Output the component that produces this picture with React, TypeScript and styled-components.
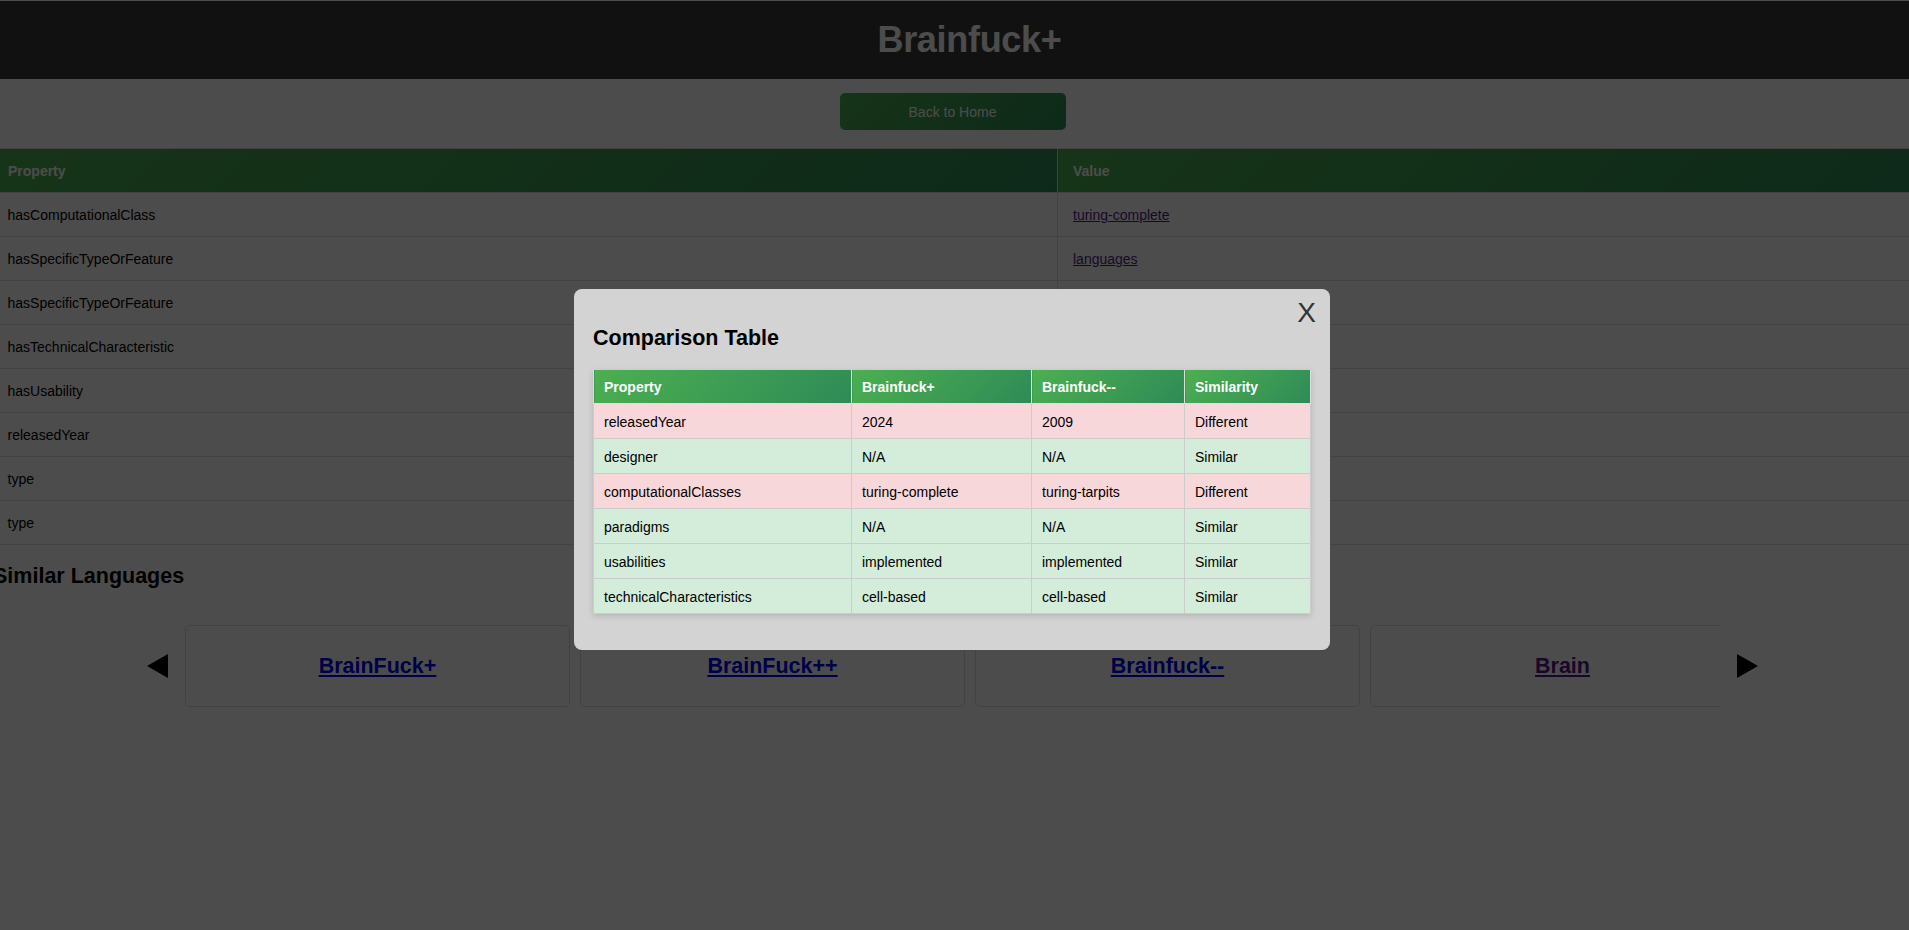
import React from "react";
import styled, { createGlobalStyle } from "styled-components";

const GlobalStyle = createGlobalStyle`
  html, body {
    margin: 0;
    padding: 0;
    background: #ffffff;
    font-family: "Liberation Sans", Arial, sans-serif;
    font-size: 14px;
    color: #000;
    overflow: hidden;
  }
`;

const properties = [
  { name: "hasComputationalClass", value: "turing-complete" },
  { name: "hasSpecificTypeOrFeature", value: "languages" },
  { name: "hasSpecificTypeOrFeature", value: "esoteric" },
  { name: "hasTechnicalCharacteristic", value: "cell-based" },
  { name: "hasUsability", value: "implemented" },
  { name: "releasedYear", value: "2024" },
  { name: "type", value: "Language" },
  { name: "type", value: "Esolang" },
];

const comparison = [
  { prop: "releasedYear", a: "2024", b: "2009", same: false },
  { prop: "designer", a: "N/A", b: "N/A", same: true },
  { prop: "computationalClasses", a: "turing-complete", b: "turing-tarpits", same: false },
  { prop: "paradigms", a: "N/A", b: "N/A", same: true },
  { prop: "usabilities", a: "implemented", b: "implemented", same: true },
  { prop: "technicalCharacteristics", a: "cell-based", b: "cell-based", same: true },
];

const similar = [
  { name: "BrainFuck+", visited: false },
  { name: "BrainFuck++", visited: false },
  { name: "Brainfuck--", visited: false },
  { name: "Brain", visited: true },
];

const App: React.FC = () => {
  return (
    <>
      <GlobalStyle />
      <Page>
        <Header>
          <Title>Brainfuck+</Title>
        </Header>
        <BackButton>Back to Home</BackButton>

        <PropTable>
          <thead>
            <tr>
              <PropHead $wide>Property</PropHead>
              <PropHead>Value</PropHead>
            </tr>
          </thead>
          <tbody>
            {properties.map((p, i) => (
              <tr key={i}>
                <PropCell>{p.name}</PropCell>
                <PropCell>
                  <TableLink href="#">{p.value}</TableLink>
                </PropCell>
              </tr>
            ))}
          </tbody>
        </PropTable>

        <SectionTitle>Similar Languages</SectionTitle>
        <Carousel>
          <Arrow aria-label="previous">
            <svg width="21" height="24" viewBox="0 0 21 24">
              <polygon points="21,0 21,24 0,12" fill="#000" />
            </svg>
          </Arrow>
          <Strip>
            {similar.map((s) => (
              <Card key={s.name}>
                <CardLink href="#" $visited={s.visited}>
                  {s.name}
                </CardLink>
              </Card>
            ))}
          </Strip>
          <Arrow aria-label="next">
            <svg width="21" height="24" viewBox="0 0 21 24">
              <polygon points="0,0 0,24 21,12" fill="#000" />
            </svg>
          </Arrow>
        </Carousel>
      </Page>

      <Overlay>
        <Modal>
          <CloseButton>X</CloseButton>
          <ModalTitle>Comparison Table</ModalTitle>
          <CompareTable>
            <colgroup>
              <col style={{ width: 258 }} />
              <col style={{ width: 180 }} />
              <col style={{ width: 153 }} />
              <col />
            </colgroup>
            <thead>
              <tr>
                <CompareHead>Property</CompareHead>
                <CompareHead>Brainfuck+</CompareHead>
                <CompareHead>Brainfuck--</CompareHead>
                <CompareHead>Similarity</CompareHead>
              </tr>
            </thead>
            <tbody>
              {comparison.map((r) => (
                <CompareRow key={r.prop} $same={r.same}>
                  <CompareCell>{r.prop}</CompareCell>
                  <CompareCell>{r.a}</CompareCell>
                  <CompareCell>{r.b}</CompareCell>
                  <CompareCell>{r.same ? "Similar" : "Different"}</CompareCell>
                </CompareRow>
              ))}
            </tbody>
          </CompareTable>
        </Modal>
      </Overlay>
    </>
  );
};

const Page = styled.div`
  padding-top: 1px;
  min-height: 929px;
  background: #ffffff;
`;

const Header = styled.header`
  background-color: #393939;
  height: 78px;
  display: flex;
  align-items: center;
  justify-content: center;
  padding-left: 30px;
`;

const Title = styled.h1`
  margin: 0;
  color: #ffffff;
  font-size: 36px;
  font-weight: bold;
  letter-spacing: -0.3px;
`;

const BackButton = styled.button`
  display: block;
  margin: 14px auto 18px;
  width: 226px;
  height: 37px;
  border: none;
  border-radius: 5px;
  background: linear-gradient(135deg, #4caf50, #2e8b57);
  color: #ffffff;
  font-family: inherit;
  font-size: 14px;
  cursor: pointer;
  transform: translateX(-2px);
`;

const PropTable = styled.table`
  margin-left: -8px;
  width: calc(100% + 16px);
  border-collapse: collapse;
`;

const PropHead = styled.th<{ $wide?: boolean }>`
  width: ${(p) => (p.$wide ? "1034px" : "auto")};
  padding: 15px 15px 13px;
  line-height: 15px;
  text-align: left;
  font-weight: bold;
  color: #ffffff;
  background: linear-gradient(135deg, #4caf50, #2e8b57);
  border: 1px solid #dddddd;
`;

const PropCell = styled.td`
  padding: 15px 15px 13px;
  line-height: 15px;
  border: 1px solid #dddddd;
  border-left: none;
  &:last-child {
    border-left: 1px solid #dddddd;
  }
`;

const TableLink = styled.a`
  color: #551a8b;
  text-decoration: underline;
`;

const SectionTitle = styled.h2`
  margin: 19px 0 0 -7px;
  font-size: 21.5px;
  line-height: 24px;
  font-weight: bold;
`;

const Carousel = styled.div`
  display: flex;
  align-items: center;
  justify-content: center;
  gap: 17px;
  margin-top: 37px;
  margin-right: 4px;
`;

const Arrow = styled.button`
  display: flex;
  padding: 0;
  border: none;
  background: none;
  cursor: pointer;
`;

const Strip = styled.div`
  width: 1535px;
  overflow: hidden;
  display: flex;
  gap: 10px;
`;

const Card = styled.div`
  flex: 0 0 385px;
  height: 82px;
  box-sizing: border-box;
  border: 1px solid #dddddd;
  border-radius: 5px;
  background: #ffffff;
  display: flex;
  align-items: center;
  justify-content: center;
`;

const CardLink = styled.a<{ $visited: boolean }>`
  color: ${(p) => (p.$visited ? "#551a8b" : "#0000ee")};
  font-size: 21.5px;
  font-weight: bold;
  text-decoration: underline;
`;

const Overlay = styled.div`
  position: fixed;
  inset: 0;
  background: rgba(0, 0, 0, 0.7);
  display: flex;
  align-items: center;
  justify-content: center;
`;

const Modal = styled.div`
  position: relative;
  width: 718px;
  padding: 19px;
  margin: 9px 5px 0 0;
  background: #d3d3d3;
  border-radius: 8px;
`;

const CloseButton = styled.button`
  position: absolute;
  top: 10px;
  right: 14px;
  padding: 0;
  border: none;
  background: none;
  font-family: inherit;
  font-size: 28px;
  line-height: 1;
  color: #333333;
  cursor: pointer;
`;

const ModalTitle = styled.h2`
  margin: 18px 0 20px;
  font-size: 21.5px;
  line-height: 24px;
  font-weight: bold;
`;

const CompareTable = styled.table`
  width: 100%;
  border-collapse: collapse;
  table-layout: fixed;
  margin-bottom: 17px;
  box-shadow: 0 2px 6px rgba(0, 0, 0, 0.15);
`;

const CompareHead = styled.th`
  padding: 9px 10px 8px;
  line-height: 16px;
  text-align: left;
  font-weight: bold;
  color: #ffffff;
  background: linear-gradient(135deg, #4caf50, #2e8b57);
  border: 1px solid #dddddd;
  border-top: none;
`;

const CompareRow = styled.tr<{ $same: boolean }>`
  background: ${(p) => (p.$same ? "#d4edda" : "#f8d7da")};
`;

const CompareCell = styled.td`
  padding: 10px 10px 8px;
  line-height: 16px;
  border: 1px solid #cccccc;
`;

export default App;
